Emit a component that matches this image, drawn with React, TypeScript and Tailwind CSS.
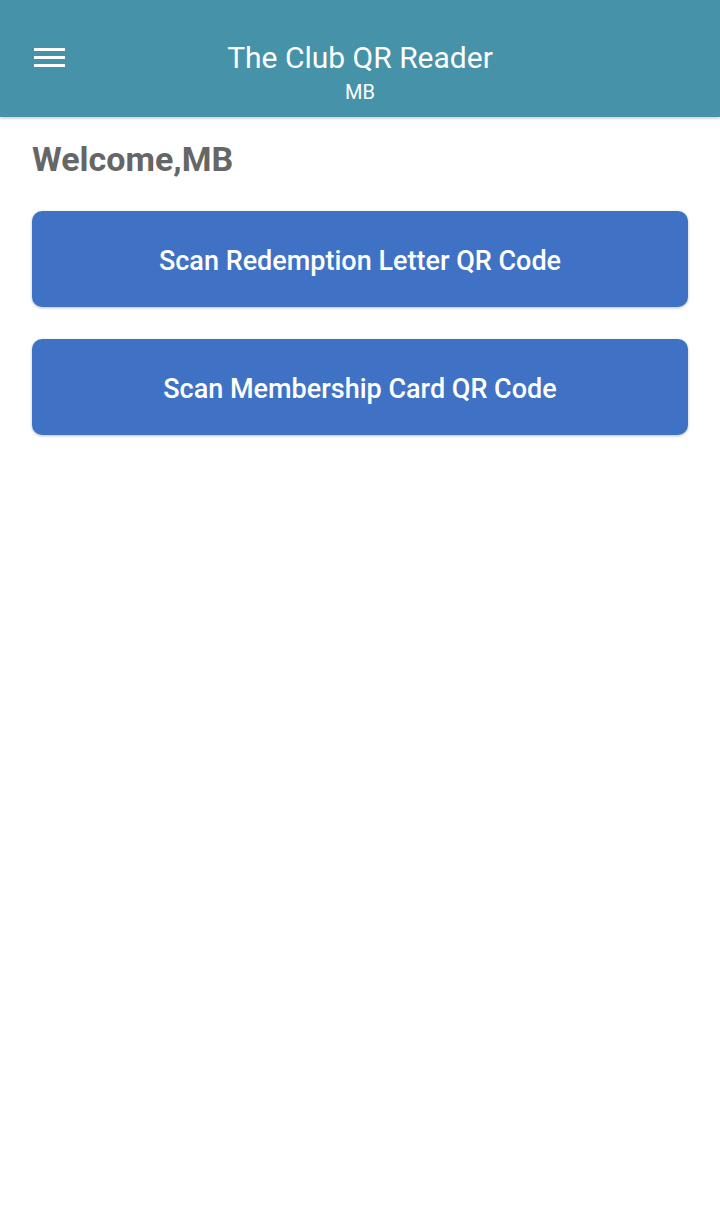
import React from 'react';

const actions = ['Scan Redemption Letter QR Code', 'Scan Membership Card QR Code'];

export default function App() {
  return (
    <div className="min-h-[1228px] w-[720px] bg-white font-['Roboto',sans-serif]">
      {/* App bar */}
      <header className="relative flex h-[117px] flex-col items-center bg-[#4692a8] pt-[40px] text-white shadow-[0_1px_3px_rgba(0,0,0,0.25)]">
        <button className="absolute left-[34px] top-[48px] flex w-[31px] flex-col gap-[5px]" aria-label="menu">
          <span className="h-[3px] w-full bg-white" />
          <span className="h-[3px] w-full bg-white" />
          <span className="h-[3px] w-full bg-white" />
        </button>
        <h1 className="text-[30px] leading-[36px] font-normal">The Club QR Reader</h1>
        <span className="mt-[4px] text-[20px] leading-[24px]">MB</span>
      </header>

      <main className="px-8 pt-[22px]">
        <h2 className="text-[34px] leading-[40px] font-bold text-[#666666]">Welcome,MB</h2>
        <div className="mt-[32px] flex flex-col gap-8">
          {actions.map((label) => (
            <button
              key={label}
              className="h-24 w-full rounded-[10px] bg-[#3f72c4] pt-[4px] text-[27px] font-medium text-white shadow-[0_1px_3px_rgba(0,0,0,0.25)]"
            >
              {label}
            </button>
          ))}
        </div>
      </main>
    </div>
  );
}
